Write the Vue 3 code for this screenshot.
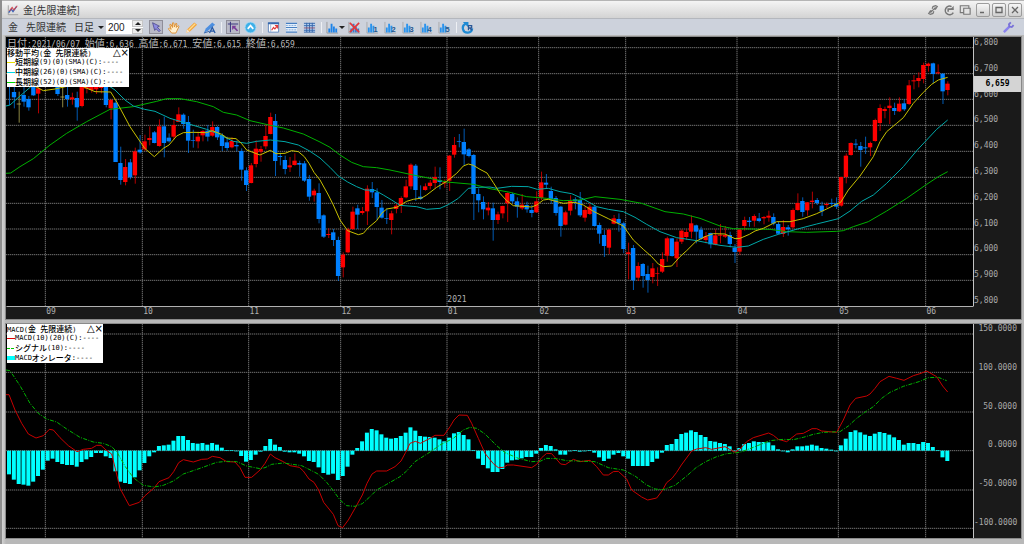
<script setup>
import {ref, computed} from 'vue'

const bars = ref(200)

// first candle centre and distance between candles, chart units
const X0 = 28
const STEP = 14.51
const cx = (i) => X0 + i * STEP

const months = [
  {x: 136, text: '09'}, {x: 427, text: '10'}, {x: 746, text: '11'}, {x: 1022, text: '12'},
  {x: 1341, text: '01'}, {x: 1616, text: '02'}, {x: 1877, text: '03'}, {x: 2211, text: '04'},
  {x: 2515, text: '05'}, {x: 2777, text: '06'}
]
const prices = ['6,800', '6,700', '6,600', '6,500', '6,400', '6,300', '6,200', '6,100', '6,000', '5,900', '5,800']
const priceGrid = [-97, -19, 58, 136, 214, 292, 370, 447, 524, 601]
const macdLabels = ['150.0000', '100.0000', '50.0000', '0.0000', '-50.0000', '-100.0000']
const macdGrid = [57, 172, 291, 407, 525, 640]

const lastPrice = 6659
const tagTop = computed(() => ((6800 - lastPrice) * 0.775 + 32) / 807 * 100 + '%')

const quote = [
  ['日付', ':2021/06/07 '], ['始値', ':6,636 '], ['高値', ':6,671 '], ['安値', ':6,615 '], ['終値', ':6,659']
]

// kind, high, body top, body bottom, low
const raw = `b -20 -10 12 75,b 20 36 52 85,y 35 71 73 128,b 20 45 65 80,b 48 57 82 92,b -5 10 46 48,r 5 25 41 100,r -20 -15 5 14,
r -30 -20 5 12,b -30 -10 8 14,b 0 10 42 48,y 20 50 52 82,b 20 45 57 80,r 38 52 58 74,b 35 54 82 122,r -10 -5 78 82,
r -10 10 26 40,r 0 20 30 38,r 0 18 28 42,r 0 12 24 40,b 0 5 75 82,r 57 60 85 118,b 60 68 246 246,b 200 249 300 314,
r 237 261 306 316,b 237 247 292 298,r 203 214 286 311,b 165 209 217 221,r 164 184 208 213,r 139 174 180 196,b 153 157 189 190,r 118 139 198 200,
b 110 139 189 232,b 160 173 184 188,r 118 135 170 178,r 82 103 126 126,b 100 104 132 146,b 108 126 182 219,b 149 181 183 203,r 155 170 184 205,
r 150 153 166 184,b 135 152 170 184,r 124 141 167 170,b 138 141 172 180,b 160 165 198 213,b 170 187 204 212,r 172 183 202 205,b 182 195 199 214,
b 205 213 269 302,b 262 271 315 333,r 249 256 309 310,r 181 206 252 262,r 198 207 215 245,r 133 168 199 208,r 98 111 162 163,b 102 123 243 288,
b 218 228 231 256,b 227 240 267 283,r 231 256 262 276,r 220 242 255 257,b 242 249 254 290,b 243 250 302 306,b 285 297 350 362,r 326 332 346 365,
b 310 339 417 430,b 403 406 470 474,r 445 462 465 474,b 447 457 480 498,b 470 480 588 603,r 517 524 562 592,r 443 448 517 520,r 380 395 447 450,
b 374 385 404 447,r 381 393 399 404,r 316 326 394 435,b 306 327 337 354,b 325 337 381 420,b 360 383 413 416,b 385 414 416 432,r 392 400 420 463,
r 370 377 387 400,r 349 354 378 399,r 299 319 352 355,r 250 254 319 328,b 252 257 330 363,b 316 350 357 360,r 310 319 330 332,r 300 308 318 328,
r 260 291 309 324,b 262 300 306 328,r 298 307 310 323,r 225 227 302 333,r 171 195 224 233,b 162 184 186 202,b 146 186 223 258,b 204 208 228 232,
b 222 225 342 420,b 325 342 361 397,b 349 366 388 418,r 366 383 391 406,b 368 385 420 482,r 395 403 420 432,r 377 378 400 415,r 337 339 370 426,
b 338 342 364 370,b 352 364 380 413,r 342 374 385 390,b 365 375 388 398,b 375 390 399 412,r 334 364 397 399,r 275 307 354 360,b 282 308 314 325,
b 320 333 358 372,b 348 354 399 407,b 378 380 438 470,r 392 397 434 436,r 346 363 392 406,b 352 358 364 388,b 336 360 406 411,r 380 390 413 425,
r 366 380 402 405,b 376 380 438 440,b 428 435 461 491,b 450 465 498 531,r 446 449 503 522,r 405 415 431 433,b 400 417 430 455,b 425 430 507 520,
r 488 517 522 598,b 495 504 601 630,r 547 558 593 603,b 549 552 588 623,b 557 582 600 638,r 549 565 591 610,r 562 579 581 618,r 517 537 575 579,
r 470 475 527 545,b 474 475 528 530,r 475 485 535 561,r 448 452 485 492,r 448 456 471 480,r 406 430 455 475,b 434 436 455 490,b 440 449 476 480,
r 456 469 480 490,b 458 459 493 505,r 448 466 494 496,r 432 464 467 490,r 438 465 470 474,b 455 465 492 502,b 492 503 516 549,r 445 449 515 525,
r 410 420 438 452,b 411 422 426 440,r 403 408 422 440,b 399 415 423 427,r 408 411 415 433,r 392 407 413 425,b 400 411 431 436,b 425 432 461 463,
r 420 441 462 471,b 435 442 448 467,r 385 390 442 446,r 340 369 390 392,b 352 363 396 410,r 366 367 391 407,r 335 362 366 385,b 354 360 369 375,
b 365 377 394 408,r 367 372 375 385,b 356 369 372 380,b 352 370 380 387,r 290 291 377 380,r 220 227 291 310,r 187 189 225 227,b 177 191 194 205,
b 186 198 210 260,b 170 202 205 222,r 185 189 202 228,r 116 120 183 185,r 73 84 129 153,r 80 87 93 115,r 52 77 84 132,b 68 84 93 105,
r 52 71 94 96,b 58 70 88 93,r 0 16 72 75,r -15 1 4 28,r -23 -6 3 22,r -52 -45 -3 10,r -52 -49 -42 -25,b -52 -50 -18 10,
r -47 -23 -20 -17,b -20 -19 34 72,r 4 11 30 46`

const candles = raw.split(',').map((row, i) => {
  const [kind, high, top, bottom, low] = row.trim().split(' ')
  return {kind, high: +high, top: +top, bottom: +bottom, low: +low, x: cx(i)}
})

const short = '20,-20 95,14 130,32 165,27 215,16 245,18 285,35 332,36 347,60 390,140 434,205 463,230 490,205 507,195 530,168 550,158 580,157 620,158 637,152 665,163 681,174 708,176 724,190 740,210 780,225 811,211 828,221 855,220 875,212 895,215 913,230 927,250 942,277 960,300 985,345 1000,375 1020,420 1043,452 1075,464 1090,460 1105,443 1130,422 1145,400 1160,387 1190,382 1220,364 1240,358 1265,354 1280,345 1310,322 1340,304 1370,280 1390,258 1405,252 1420,256 1440,268 1461,279 1480,308 1500,340 1520,362 1540,377 1595,381 1610,375 1630,360 1645,358 1690,370 1725,367 1750,375 1780,394 1825,416 1870,438 1900,480 1930,508 1955,530 1975,552 1990,560 2015,558 2040,530 2060,512 2088,484 2115,470 2140,461 2175,462 2205,476 2220,475 2248,463 2265,453 2290,445 2330,425 2370,425 2410,416 2450,401 2480,387 2510,372 2522,367 2545,330 2580,288 2620,230 2640,185 2660,155 2690,130 2710,113 2740,70 2770,37 2795,13 2815,0 2843,-8'
const middle = '18,78 30,75 60,48 95,18 130,0 200,-12 280,-5 330,20 345,30 375,60 400,78 434,88 465,94 510,115 560,130 620,148 650,160 700,184 740,190 770,184 811,180 855,185 895,195 927,212 960,234 990,262 1015,288 1043,306 1070,320 1095,330 1125,331 1150,345 1175,360 1200,376 1250,380 1280,388 1320,385 1345,374 1375,355 1405,325 1435,322 1470,321 1490,325 1535,319 1585,320 1612,328 1645,325 1680,335 1715,341 1750,357 1790,380 1825,388 1870,395 1905,412 1940,433 1980,455 2030,473 2090,482 2160,496 2210,502 2245,498 2290,478 2335,463 2400,445 2450,432 2515,416 2550,393 2585,364 2620,345 2660,310 2710,260 2750,212 2780,180 2810,148 2843,120'
const long = '18,280 32,279 60,260 100,236 150,195 200,160 260,125 330,88 400,80 470,64 500,56 540,56 590,65 640,80 670,97 710,105 750,122 811,136 850,144 910,162 960,186 990,202 1020,225 1055,247 1090,260 1130,263 1170,270 1240,285 1290,295 1340,306 1420,313 1440,318 1470,326 1530,337 1580,350 1640,355 1690,362 1740,360 1785,350 1860,358 1925,370 1995,395 2050,402 2100,415 2160,438 2200,446 2310,448 2360,455 2420,457 2510,454 2530,452 2560,440 2605,425 2660,393 2720,355 2780,313 2815,290 2843,275'

const hist = [
  -71, -87, -100, -102, -105, -93, -76, -57, -30, -24, -34, -40, -43, -43, -48, -34, -26, -19, -7, -7,
  -17, -22, -62, -93, -97, -100, -80, -59, -37, -17, -5, 14, 16, 18, 30, 44, 44, 32, 23, 21,
  23, 18, 23, 18, 9, 2, 1, 0, -16, -33, -28, -12, -3, 14, 35, 18, 11, -3, -5, -5,
  -9, -17, -31, -34, -50, -67, -72, -69, -88, -76, -48, -12, 8, 28, 54, 65, 61, 49, 39, 36,
  38, 44, 54, 70, 60, 44, 42, 41, 39, 34, 28, 39, 52, 56, 47, 34, 1, -24, -43, -53,
  -64, -64, -55, -36, -29, -27, -23, -19, -19, -9, 8, 17, 14, 4, -12, -12, -2, 1, -3, 0,
  1, -6, -20, -31, -24, -12, -7, -17, -24, -46, -46, -46, -46, -34, -24, -6, 17, 20, 35, 50,
  54, 61, 56, 47, 41, 29, 27, 23, 20, 13, -2, 8, 20, 23, 28, 26, 26, 25, 16, 4,
  0, -5, 4, 13, 13, 15, 18, 15, 8, 6, 3, 0, 16, 36, 56, 61, 55, 48, 44, 51,
  56, 53, 48, 40, 32, 18, 23, 23, 20, 26, 23, 11, 2, -20, -31
]
const macd = '18,239 27,239 45,285 65,325 85,357 108,369 130,362 148,343 160,345 180,368 205,392 231,410 250,403 275,400 290,391 303,391 318,405 335,417 347,465 360,520 376,550 388,572 418,562 434,543 463,518 477,500 507,488 521,470 536,443 550,434 580,441 605,433 622,432 637,424 660,428 680,440 705,441 720,458 735,487 755,487 780,465 795,445 811,417 825,428 850,440 870,452 898,457 910,468 927,492 942,502 956,525 971,562 1000,598 1014,632 1028,638 1045,615 1065,580 1087,540 1101,505 1116,477 1130,468 1160,468 1185,455 1203,438 1217,412 1230,385 1246,379 1261,385 1290,370 1305,361 1332,361 1350,335 1362,315 1377,300 1402,301 1415,325 1435,370 1455,415 1480,446 1495,458 1510,457 1522,450 1540,450 1595,458 1610,448 1625,428 1640,415 1655,416 1682,447 1696,449 1720,433 1740,440 1770,436 1790,455 1810,480 1825,480 1840,470 1855,469 1880,492 1895,525 1925,546 1943,555 1970,549 1986,528 2000,503 2016,490 2030,472 2044,450 2075,408 2090,402 2117,398 2135,403 2175,395 2205,412 2220,402 2240,380 2260,368 2306,354 2320,361 2335,373 2360,380 2390,357 2410,355 2436,341 2450,341 2465,348 2510,352 2530,315 2550,270 2567,250 2600,243 2610,237 2625,220 2640,200 2667,184 2690,190 2712,196 2740,182 2760,176 2780,168 2810,185 2828,213 2843,231'
const signal = '18,165 30,167 60,212 90,265 115,295 140,312 170,321 200,342 240,367 280,381 310,385 335,395 350,410 376,455 400,488 430,511 463,516 490,511 520,498 550,477 600,460 650,442 680,439 710,440 740,453 780,461 795,458 815,448 850,444 905,452 927,463 956,478 980,502 1000,527 1020,555 1040,572 1065,574 1087,566 1110,545 1130,525 1160,508 1200,485 1220,468 1245,440 1295,408 1320,390 1360,370 1390,345 1410,337 1430,340 1455,357 1490,392 1515,413 1555,430 1595,440 1620,439 1640,430 1670,431 1700,437 1785,440 1825,458 1870,465 1905,483 1940,510 1965,522 1990,524 2025,511 2060,483 2088,458 2117,440 2150,425 2180,416 2220,412 2260,397 2310,377 2350,373 2380,374 2410,367 2440,358 2470,352 2520,350 2545,333 2570,310 2600,288 2620,275 2645,250 2670,232 2710,214 2760,199 2785,188 2815,187 2840,197'

const presets = [1, 2, 3, 4, 5]
</script>

<template>
  <div class="window">
    <header class="title">
      <svg class="title__logo" viewBox="0 0 14 14">
        <path d="M1.500 1.500V12.500H13" fill="none" stroke="#999"/>
        <path d="M2 10L5 6L7 9L11 3" fill="none" stroke="#3b62b5" stroke-width="1.500"/>
        <path d="M3 8L6 4L8 7L12 2" fill="none" stroke="#d5404a" stroke-width="1.200"/>
      </svg>
      <h1 class="title__text">金[先限連続]</h1>
      <button class="plain" aria-label="リンク">
        <svg viewBox="0 0 14 14" fill="none" stroke="#777" stroke-width="1.400">
          <path d="M6 8L4 8L2 11L4 12L7 11L8 8.500M8 6L10 6L12 3L10 2L7 3L6 5.500M4 10L10 4"/>
        </svg>
      </button>
      <button class="plain" aria-label="更新">
        <svg viewBox="0 0 14 14" fill="none" stroke="#777" stroke-width="1.800">
          <path d="M10 3A5 5 0 1 0 12 10M6 9V6H12"/>
          <path d="M12.500 2V7H8Z" fill="#777" stroke="none"/>
        </svg>
      </button>
      <button class="plain" aria-label="複製">
        <svg viewBox="0 0 14 14" fill="#e2e2e2" stroke="#777" stroke-width="1.300">
          <path d="M1.500 2H11.500V10H1.500Z"/>
          <path d="M5.500 5H13V12H5.500Z"/>
        </svg>
      </button>
      <div class="title__controls">
        <button class="box" aria-label="最小化"><svg viewBox="0 0 12 12"><path d="M3 8.500H7" stroke="#666" stroke-width="1.500"/></svg></button>
        <button class="box" aria-label="最大化"><svg viewBox="0 0 12 12"><path d="M3 3.500H9V8.500H3Z" fill="none" stroke="#666" stroke-width="1.300"/></svg></button>
        <button class="box" aria-label="閉じる"><svg viewBox="0 0 12 12"><path d="M3 3L9 9M9 3L3 9" stroke="#666" stroke-width="1.300"/></svg></button>
      </div>
    </header>

    <div class="toolbar">
      <div class="toolbar__symbol">
        <span>金</span>
        <span>先限連続</span>
      </div>
      <button class="toolbar__period">日足 <i class="caret"></i></button>
      <div class="spin">
        <input v-model="bars" type="text" aria-label="本数">
        <div class="spin__buttons">
          <button aria-label="増やす" @click="bars++"><i class="caret caret-up"></i></button>
          <button aria-label="減らす" @click="bars--"><i class="caret"></i></button>
        </div>
      </div>
      <div class="tools">
        <button class="tool tool-on" aria-label="選択">
          <svg viewBox="0 0 14 14"><path d="M3 2L11 6L8.500 7.200L12 11L10.500 12.500L7 9L5.500 11Z" fill="#8d8ae0" stroke="#3c3980" stroke-width=".8"/></svg>
        </button>
        <button class="tool" aria-label="移動">
          <svg viewBox="0 0 14 14"><path d="M5 13L1.500 8.500L2.500 7.500L4.500 9L3 4L4.200 3.500L6 7L6 2L7.300 2L8 6.500L9.500 2.500L10.700 3L10 7L12 5L13 5.800L10.500 11L9.500 13Z" fill="#fff0cf" stroke="#dc8d2c" stroke-width="1"/></svg>
        </button>
        <button class="tool" aria-label="鉛筆">
          <svg viewBox="0 0 14 14"><path d="M1 13L2.500 9L10 1.500L13 4L5 11.500Z" fill="#f3a33a"/><path d="M4 10L11 3" stroke="#ffdc8d" stroke-width="1.500"/><path d="M1 13L2.500 9L5 11.500Z" fill="#f6e3c8"/></svg>
        </button>
        <button class="tool" aria-label="注釈">
          <svg viewBox="0 0 14 14"><path d="M1 13L3 8L10 1.500L13 4L6 10Z" fill="#4d8fe0"/><path d="M1 13L7 11" stroke="#3562a8"/><path d="M7 13L10 7L13 13M8 11H12" fill="none" stroke="#295ba6" stroke-width="1.400"/></svg>
        </button>
        <i class="sep"></i>
        <button class="tool tool-on" aria-label="クロスライン">
          <svg viewBox="0 0 14 14"><path d="M1 3.500H13M4 1V13" stroke="#3c3980" stroke-width="1.200"/><path d="M6 5.500H11L9.500 7L13 11L11.500 12L8 8.500L6 10.500Z" fill="#7a3d98"/></svg>
        </button>
        <button class="tool" aria-label="上へ">
          <svg viewBox="0 0 14 14"><circle cx="7" cy="7" r="6" fill="#3eb0e8" stroke="#b6dcf2"/><path d="M4 8.500L7 5L10 8.500" fill="none" stroke="#fff" stroke-width="1.800"/></svg>
        </button>
        <i class="sep"></i>
        <button class="tool" aria-label="チャート設定">
          <svg viewBox="0 0 14 14"><path d="M1.500 2H12.500V12H1.500Z" fill="#fff" stroke="#6087bd"/><path d="M1 2.500H13" stroke="#3568ad" stroke-width="2"/><path d="M4 3V12" stroke="#9ab4d7"/><path d="M5 10L7 7L8.500 8.500L11 5.500M8.500 5H11.500V8" fill="none" stroke="#e13b3b" stroke-width="1.300"/></svg>
        </button>
        <button class="tool" aria-label="行表示">
          <svg viewBox="0 0 14 14"><path d="M1 2H13V12H1Z" fill="#e4effb"/><path d="M1 2.500H13M1 7H13M1 12H13" stroke="#477fc1" stroke-width="1.300"/><path d="M1 4.800H13M1 9.500H13" stroke="#7fa6d5" stroke-dasharray="2 1"/></svg>
        </button>
        <button class="tool" aria-label="表示切替">
          <svg viewBox="0 0 14 14"><path d="M1 2H13V12H1Z" fill="#b6d0ef"/><path d="M1 2.500H13M1 5H13M1 10H13M1 12H13M4 2V12M7 2V12M10 2V12" stroke="#3667ab"/><path d="M1 7.500H13" stroke="#8a4967"/></svg>
        </button>
        <i class="sep"></i>
        <button class="tool tool-wide" aria-label="指標">
          <svg viewBox="0 0 14 14"><path d="M1 1V13H13" fill="none" stroke="#999"/><path d="M2.500 8H4.500V12.500H2.500ZM5 3H7V12.500H5ZM7.500 6H9.500V12.500H7.500ZM10 8H12V12.500H10Z" fill="#1e83e8"/></svg>
          <i class="caret"></i>
        </button>
        <button class="tool" aria-label="指標を消去">
          <svg viewBox="0 0 14 14"><path d="M1 1V13H13" fill="none" stroke="#999"/><path d="M2.500 8H4.500V12.500H2.500ZM5 3H7V12.500H5ZM7.500 6H9.500V12.500H7.500ZM10 8H12V12.500H10Z" fill="#3b78c6"/><path d="M2 2L12 12M12 2L2 12" stroke="#e2373c" stroke-width="1.800"/></svg>
        </button>
        <button v-for="n in presets" :key="n" class="tool" :aria-label="'設定' + n">
          <svg viewBox="0 0 14 14">
            <path d="M1 1V13H13" fill="none" stroke="#aaa"/>
            <path d="M2 7H4V12.500H2ZM4.500 3H6.500V12.500H4.500ZM7 5H9V12.500H7Z" fill="#2a93ed"/>
            <text class="preset" x="8" y="12">{{ n }}</text>
          </svg>
        </button>
        <i class="sep"></i>
        <button class="tool" aria-label="再読込">
          <svg viewBox="0 0 14 14"><path d="M5 3A5 5 0 1 0 12 8" fill="none" stroke="#1e8ad4" stroke-width="2.400"/><path d="M2 1H8V7Z" fill="#1e8ad4"/><path d="M8 10V5H11.500V7.500H9L12 10" fill="none" stroke="#2a5796" stroke-width="1.300"/></svg>
        </button>
      </div>
      <button class="tool toolbar__wrench" aria-label="設定">
        <svg viewBox="0 0 14 14"><path d="M2 12L8 6" stroke="#8a82ee" stroke-width="2.600"/><path d="M9.500 1.500L7.500 3.500L8 6L10.500 6.500L12.500 4.500" fill="none" stroke="#7770d8" stroke-width="2"/></svg>
      </button>
    </div>

    <main class="charts">
      <section class="panel">
        <div class="plot">
          <svg viewBox="18 -129 2901 807">
            <g class="grid">
              <path v-for="y in priceGrid" :key="y" :d="`M18 ${y}H2919`"/>
              <path v-for="m in months" :key="m.x" :d="`M${m.x} -129V678`"/>
            </g>
            <g v-for="c in candles" :key="c.x" :class="'candle-' + c.kind">
              <rect class="wick" :x="c.x - 1" :y="c.high" width="3" :height="c.low - c.high"/>
              <rect :x="c.x - 7" :y="c.top" width="13" :height="c.bottom - c.top"/>
            </g>
            <polyline class="line line-long" :points="long"/>
            <polyline class="line line-middle" :points="middle"/>
            <polyline class="line line-short" :points="short"/>
            <text class="label" x="1342" y="667">2021</text>
          </svg>
          <p class="quote"><template v-for="q in quote" :key="q[0]"><span class="kanji">{{ q[0] }}</span>{{ q[1] }}</template></p>
          <div class="legend legend-price">
            <div class="legend__head"><span><b>移動平均</b>(<b>金</b> <b>先限連続</b>)</span><span class="legend__marks">△×</span></div>
            <div class="legend__row"><i class="key key-short"></i><b>短期線</b>(9)(0)(SMA)(C):----</div>
            <div class="legend__row"><i class="key key-middle"></i><b>中期線</b>(26)(0)(SMA)(C):----</div>
            <div class="legend__row"><i class="key key-long"></i><b>長期線</b>(52)(0)(SMA)(C):----</div>
          </div>
        </div>
        <div class="axis">
          <span v-for="p in prices" :key="p">{{ p }}</span>
          <strong class="tag" :style="{top: tagTop}">6,659</strong>
        </div>
        <svg class="months" viewBox="18 0 2901 39">
          <path d="M18 1H2919" stroke="#d0d0d0" stroke-width="3"/>
          <text v-for="m in months" :key="m.x" class="label" :x="m.x + 1" y="25">{{ m.text }}</text>
        </svg>
        <div class="corner"></div>
      </section>

      <section class="panel">
        <div class="plot">
          <svg viewBox="18 27 2901 642">
            <g class="grid">
              <path v-for="y in macdGrid" :key="y" :d="`M18 ${y}H2919`"/>
              <path v-for="m in months" :key="m.x" :d="`M${m.x} 27V669`"/>
            </g>
            <rect
              v-for="(h, i) in hist" :key="i" class="bar"
              :x="cx(i) - 7" :y="h > 0 ? 407 - h : 407" width="12" :height="Math.max(Math.abs(h), 2)"
            />
            <polyline class="line line-macd" :points="macd"/>
            <polyline class="line line-signal" :points="signal"/>
          </svg>
          <div class="legend legend-macd">
            <div class="legend__head"><span>MACD(<b>金</b> <b>先限連続</b>)</span><span class="legend__marks">△×</span></div>
            <div class="legend__row"><i class="key key-macd"></i>MACD(10)(20)(C):----</div>
            <div class="legend__row"><i class="key key-signal"></i><b>シグナル</b>(10):----</div>
            <div class="legend__row"><i class="key key-bar"></i>MACD<b>オシレータ</b>:----</div>
          </div>
        </div>
        <div class="axis axis-macd">
          <span v-for="p in macdLabels" :key="p">{{ p }}</span>
        </div>
      </section>
    </main>
  </div>
</template>

<style>
body {
  margin: 0;
  background: #e4e4e4;
}
</style>

<style scoped>
.window {
  border-left: 2px solid #8e8e8e;
  background: #bdbdbd;
  font-family: "Noto Sans CJK JP", sans-serif;
  font-size: 10px;
  color: #333;
}

.window * {
  box-sizing: border-box;
}

svg {
  display: block;
}

button {
  padding: 0;
  border: 0;
  background: none;
  font: inherit;
  color: inherit;
  cursor: pointer;
}

.title {
  display: flex;
  align-items: center;
  gap: 2px;
  height: 18px;
  padding: 0 2px 0 5px;
  border-top: 1px solid #b5b5b5;
  background: linear-gradient(#f4f4f4, #d3d3d3);
}

.title__logo {
  width: 12px;
  height: 12px;
}

.title__text {
  flex: 1;
  margin: 0 0 0 2px;
  font-size: 10px;
  line-height: 16px;
  font-weight: 400;
}

.plain,
.plain svg {
  width: 14px;
  height: 12px;
}

.title__controls {
  display: flex;
  gap: 2px;
  margin-left: 2px;
}

.box {
  width: 14px;
  height: 14px;
  border: 1px solid #9c9c9c;
  border-radius: 2px;
  background: linear-gradient(#f6f6f6, #cfcfcf);
}

.box svg {
  width: 12px;
  height: 12px;
}

.toolbar {
  display: flex;
  align-items: center;
  height: 17px;
  padding: 0 8px 0 6px;
  border-top: 1px solid #b4b7bd;
  background: #cdd2dc;
  line-height: 16px;
}

.toolbar__symbol {
  display: flex;
  gap: 8px;
}

.toolbar__period {
  display: flex;
  align-items: center;
  gap: 4px;
  margin-left: 8px;
}

.caret {
  border: 3px solid transparent;
  border-top-color: #222;
  border-bottom: 0;
}

.caret-up {
  border-top: 0;
  border-bottom: 3px solid #222;
}

.spin {
  display: flex;
  width: 37px;
  height: 14px;
  margin: 0 6px 0 2px;
  background: #fff;
}

.spin input {
  width: 26px;
  padding: 0 2px;
  border: 0;
  background: none;
  font: 10px "Liberation Sans", sans-serif;
  color: #222;
}

.spin__buttons {
  display: flex;
  flex-direction: column;
  gap: 1px;
  width: 11px;
}

.spin__buttons button {
  display: grid;
  place-items: center;
  flex: 1;
  border: 1px solid #c6c6c6;
  background: #ececec;
}

.tools {
  display: flex;
  align-items: center;
  gap: 4px;
}

.tool {
  display: flex;
  align-items: center;
  width: 14px;
  height: 14px;
}

.tool svg {
  flex: none;
  width: 13px;
  height: 13px;
}

.tool-on {
  border: 1px solid #8f8e99;
  background: #b9bac7;
}

.tool-on svg {
  width: 12px;
  height: 12px;
}

.tool-wide {
  width: 18px;
}

.preset {
  font: bold 8px "Liberation Sans", sans-serif;
  fill: #22558f;
}

.sep {
  width: 1px;
  height: 11px;
  background: #eef0f4;
}

.toolbar__wrench {
  margin-left: auto;
}

.charts {
  display: flex;
  flex-direction: column;
  gap: 5px;
  padding: 2px 3px 6px 4px;
  background: linear-gradient(90deg, #d2d2d2, #b8b8b8 4px);
}

.panel {
  display: grid;
  grid-template-columns: 1fr 47px;
  outline: 1px solid #8a8a8a;
}

.plot {
  position: relative;
  border-right: 1px solid #c4c4c4;
  background: #000;
}

.grid path {
  fill: none;
  stroke: #707070;
  stroke-width: 3;
  stroke-dasharray: 4 2;
}

.candle-r {
  fill: #f00;
}

.candle-b {
  fill: #0080ff;
}

.candle-y {
  fill: #c8c060;
}

.wick {
  opacity: .7;
}

.line {
  fill: none;
  stroke-width: 3;
  stroke-linejoin: round;
}

.line-short {
  stroke: #c8c000;
}

.line-middle {
  stroke: #00a8a8;
}

.line-long {
  stroke: #00b000;
}

.line-macd {
  stroke: #c80000;
}

.line-signal {
  stroke: #00b400;
  stroke-dasharray: 12 4 3 4;
}

.bar {
  fill: #0ff;
}

.label {
  font: 24px "DejaVu Sans Mono", monospace;
  fill: #b0b0b0;
}

.quote {
  position: absolute;
  top: 1px;
  left: 1px;
  margin: 0;
  font: 8px/10px "DejaVu Sans Mono", monospace;
  color: #b8b8b8;
  white-space: pre;
}

.kanji {
  font: 10px/10px "Noto Sans CJK JP", sans-serif;
}

.legend {
  position: absolute;
  left: 1px;
  background: #fff;
  font: 7px/10px "DejaVu Sans Mono", monospace;
  color: #000;
  white-space: pre;
}

.legend b {
  font: 500 8px/10px "Noto Sans CJK JP", sans-serif;
}

.legend-price {
  top: 11px;
  width: 122px;
}

.legend-macd {
  top: 0;
  width: 96px;
}

.legend__head {
  display: flex;
  justify-content: space-between;
  height: 9px;
  line-height: 9px;
}

.legend__marks {
  font: 10px/9px "DejaVu Sans", sans-serif;
}

.legend__row {
  display: flex;
  align-items: center;
  height: 10px;
}

.key {
  width: 8px;
  height: 1px;
}

.key-short {
  background: #e8e000;
}

.key-middle {
  background: #00d8e8;
}

.key-long {
  background: #00d800;
}

.key-macd {
  background: #e00000;
}

.key-signal {
  background: repeating-linear-gradient(90deg, #00c800 0 3px, transparent 3px 4px);
}

.key-bar {
  height: 4px;
  background: #0ff;
}

.axis {
  position: relative;
  display: flex;
  flex-direction: column;
  justify-content: space-between;
  padding-top: 1px;
  background: #1a1a1a;
  font: 8px/10px "DejaVu Sans Mono", monospace;
  color: #a8a8a8;
}

.axis-macd {
  padding: 0 4px 10px 0;
  text-align: right;
}

.tag {
  position: absolute;
  left: 0;
  width: 100%;
  transform: translateY(-50%);
  background: #d4d4d4;
  line-height: 16px;
  text-align: center;
  color: #000;
}

.months {
  width: 100%;
  background: #1a1a1a;
}

.corner {
  background: #1a1a1a;
}
</style>
